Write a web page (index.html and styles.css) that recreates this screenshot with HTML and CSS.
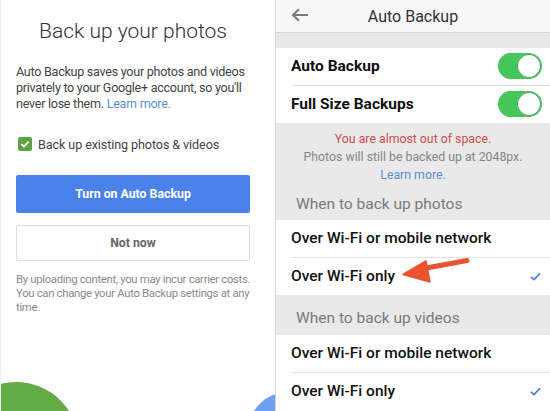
FILE: index.html
```html
<!DOCTYPE html>
<html>
<head>
<meta charset="utf-8">
<link rel="stylesheet" href="styles.css">
</head>
<body>
<div class="screen">
  <section class="left">
    <h1 class="title">Back up your photos</h1>
    <p class="intro">Auto Backup saves your photos and videos privately to your Google+ account, so you'll never lose them. <span class="link">Learn more.</span></p>
    <label class="check">
      <span class="box"><svg width="14" height="14" viewBox="0 0 14 14"><path d="M3.5 7.2 L6 9.6 L10.6 4.6" fill="none" stroke="#fff" stroke-width="1.8"/></svg></span>
      Back up existing photos &amp; videos
    </label>
    <div class="btn primary">Turn on Auto Backup</div>
    <div class="btn secondary">Not now</div>
    <p class="fine">By uploading content, you may incur carrier costs. You can change your Auto Backup settings at any time.</p>
    <div class="blob green"></div>
    <div class="blob blue"></div>
  </section>
  <section class="right">
    <header class="nav">
      <svg class="back" width="18" height="14" viewBox="0 0 18 14"><path d="M17 7 H2.5 M8 1.2 L2 7 L8 12.8" fill="none" stroke="#7a7a7a" stroke-width="2"/></svg>
      <span class="nav-title">Auto Backup</span>
    </header>
    <div class="spacer"></div>
    <div class="group">
      <div class="row strong"><span>Auto Backup</span><span class="toggle"></span></div>
      <div class="row strong"><span>Full Size Backups</span><span class="toggle"></span></div>
    </div>
    <div class="notice">
      <div class="warn">You are almost out of space.</div>
      <div class="sub">Photos will still be backed up at 2048px.</div>
      <div class="link">Learn more.</div>
    </div>
    <div class="section-head first">When to back up photos</div>
    <div class="group">
      <div class="row"><span>Over Wi-Fi or mobile network</span></div>
      <div class="row"><span>Over Wi-Fi only</span><svg class="tick" width="11" height="9" viewBox="0 0 11 9"><path d="M1 4.8 L4 7.6 L10 1.2" fill="none" stroke="#3a7de0" stroke-width="1.6"/></svg></div>
    </div>
    <div class="section-head">When to back up videos</div>
    <div class="group">
      <div class="row"><span>Over Wi-Fi or mobile network</span></div>
      <div class="row"><span>Over Wi-Fi only</span><svg class="tick" width="11" height="9" viewBox="0 0 11 9"><path d="M1 4.8 L4 7.6 L10 1.2" fill="none" stroke="#3a7de0" stroke-width="1.6"/></svg></div>
    </div>
    <svg class="arrow" width="100" height="34" viewBox="0 0 100 34"><path d="M88 4.5 L42 13" stroke="#e9532d" stroke-width="5" stroke-linecap="round" fill="none"/><path d="M24 18.5 L47 5 L51 26 Z" fill="#e9532d" stroke="#e9532d" stroke-width="1.5" stroke-linejoin="round"/></svg>
  </section>
</div>
</body>
</html>
```
FILE: styles.css
```css
* { box-sizing: border-box; margin: 0; padding: 0; }
html, body { width: 550px; height: 411px; overflow: hidden; background: #fff; }
body { font-family: Roboto, "Liberation Sans", sans-serif; }
.screen { display: grid; grid-template-columns: 275px 275px; height: 411px; }

.left { position: relative; overflow: hidden; padding: 18px 25px 0 15px; background: #fff; border-left: 1px solid #f0f0f0; }
.title { font-weight: 300; font-size: 21px; line-height: 26px; color: #333; text-align: center; }
.intro { margin-top: 20px; font-size: 12.6px; line-height: 16px; color: #444; letter-spacing: -0.28px; }
.link { color: #5b8fd6; }
.check { display: flex; align-items: center; gap: 6px; margin-top: 24px; font-size: 12.6px; color: #444; height: 16px; margin-left: 2px; letter-spacing: -0.1px; }
.box { width: 14px; height: 14px; border-radius: 2px; background: #5ea244; display: flex; }
.btn { height: 38px; display: flex; align-items: center; justify-content: center; font-size: 12.3px; font-weight: 700; border-radius: 2px; }
.primary { margin-top: 23px; background: #4a82ea; color: #fff; }
.secondary { margin-top: 12px; height: 36px; border: 1px solid #dcdcdc; color: #666; background: #fff; }
.fine { margin-top: 12px; margin-right: -4px; font-size: 11.3px; line-height: 14px; color: #8a8a8a; letter-spacing: -0.3px; }
.blob { position: absolute; border-radius: 50%; }
.green { width: 126px; height: 126px; left: -48px; top: 382px; background: #62ac45; }
.blue { width: 80px; height: 80px; left: 247px; top: 392px; background: #6e9ff0; }

.right { position: relative; background: #fff; border-left: 1px solid #d8d8d8; font-family: Roboto, "Liberation Sans", sans-serif; }
.nav { height: 33px; background: #f7f7f7; border-bottom: 1px solid #d6d6d6; display: flex; align-items: center; justify-content: center; position: relative; }
.back { position: absolute; left: 15px; top: 8px; }
.nav-title { font-size: 16px; color: #333; }
.spacer { height: 15px; background: #e9e9e9; }
.group { background: #fff; }
.row { height: 37.5px; margin-left: 15px; padding-right: 8px; display: flex; align-items: center; justify-content: space-between; font-size: 15.5px; font-weight: 500; color: #111; border-bottom: 1px solid #e2e2e2; }
.row:last-child { border-bottom: none; }
.row.strong { font-weight: 700; }
.toggle { width: 44px; height: 26px; border-radius: 13px; background: #45c65b; position: relative; }
.toggle::after { content: ""; position: absolute; right: 1px; top: 1px; width: 24px; height: 24px; border-radius: 50%; background: #fff; box-shadow: 0 0 0 1px #3e9e4f inset; }
.tick { margin-right: 1px; }
.notice { background: #e9e9e9; padding-top: 7px; text-align: center; font-size: 12.3px; line-height: 18px; }
.warn { color: #d24a4a; }
.sub { color: #858585; }
.section-head { background: #e9e9e9; height: 40px; padding: 6px 0 0 20px; display: flex; align-items: center; font-size: 15.5px; color: #7a7a7a; }
.section-head.first { height: 36px; padding-top: 4px; }
.arrow { position: absolute; top: 256px; left: 103px; }
```
